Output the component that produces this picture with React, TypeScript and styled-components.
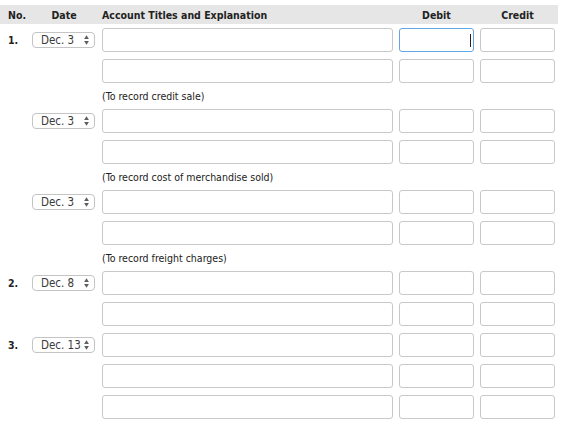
import React from "react";
import styled, { createGlobalStyle, css } from "styled-components";

const GlobalStyle = createGlobalStyle`
  body {
    margin: 0;
    padding-top: 5px;
    background: #ffffff;
    font-family: "DejaVu Sans Condensed", "DejaVu Sans", Verdana, sans-serif;
    font-size: 10.5px;
    color: #222222;
  }
`;

const COLUMNS = "29px 70px 297px 81px 81px";

const Journal = styled.div`
  width: 558px;
  display: flex;
  flex-direction: column;
`;

const HeaderRow = styled.div`
  display: grid;
  grid-template-columns: ${COLUMNS};
  height: 19px;
  align-items: center;
  background: #e6e6e6;
  font-weight: bold;
`;

const HeadCell = styled.div<{ $align?: "left" | "center" }>`
  padding: 0 3px;
  text-align: ${(p) => p.$align || "center"};
  white-space: nowrap;
  &:first-child {
    padding-left: 8px;
  }
`;

const Row = styled.div`
  display: grid;
  grid-template-columns: ${COLUMNS};
  height: 31px;
  box-sizing: border-box;
  padding: 4px 0 3px;
`;

const Cell = styled.div`
  display: flex;
  align-items: center;
  padding: 0 3px;
`;

const NoCell = styled(Cell)`
  padding-left: 8px;
  font-weight: bold;
`;

const NoteRow = styled.div`
  display: grid;
  grid-template-columns: ${COLUMNS};
  height: 19px;
  align-items: center;
`;

const Note = styled.div`
  grid-column: 3 / 6;
  padding: 0 3px;
`;

const SelectWrap = styled.div`
  position: relative;
  width: 63px;
  height: 16px;
`;

const DateSelect = styled.select`
  appearance: none;
  -webkit-appearance: none;
  width: 100%;
  height: 100%;
  box-sizing: border-box;
  margin: 0;
  padding: 0 0 0 8px;
  border: 1px solid #c4c4c4;
  border-radius: 4px;
  background: #ffffff;
  font-family: inherit;
  font-size: 11.5px;
  color: #3a3a3a;
  outline: none;
`;

const Arrows = styled.svg`
  position: absolute;
  right: 6px;
  top: 3px;
  pointer-events: none;
`;

const FieldWrap = styled.div`
  position: relative;
  width: 100%;
`;

const TextBox = styled.input<{ $focused?: boolean; $amount?: boolean }>`
  display: block;
  width: 100%;
  height: 24px;
  box-sizing: border-box;
  margin: 0;
  padding: 0 4px;
  border: 1px solid #c8c8c8;
  border-radius: 3px;
  background: #ffffff;
  font-family: inherit;
  font-size: 10.5px;
  text-align: ${(p) => (p.$amount ? "right" : "left")};
  outline: none;
  ${(p) =>
    p.$focused &&
    css`
      border-color: #62a6e6;
    `}
`;

const Caret = styled.span`
  position: absolute;
  right: 3px;
  top: 6px;
  width: 1px;
  height: 13px;
  background: #222222;
  pointer-events: none;
`;

type Part = { date: string; lines: number; note?: string };
type Entry = { no: string; parts: Part[] };

const entries: Entry[] = [
  {
    no: "1.",
    parts: [
      { date: "Dec. 3", lines: 2, note: "(To record credit sale)" },
      { date: "Dec. 3", lines: 2, note: "(To record cost of merchandise sold)" },
      { date: "Dec. 3", lines: 2, note: "(To record freight charges)" },
    ],
  },
  { no: "2.", parts: [{ date: "Dec. 8", lines: 2 }] },
  { no: "3.", parts: [{ date: "Dec. 13", lines: 3 }] },
];

const Spinner = () => (
  <Arrows width="5" height="10" viewBox="0 0 5 10">
    <path d="M2.5 0.3 L4.9 3.9 L0.1 3.9 Z" fill="#5e5e5e" />
    <path d="M2.5 9.7 L4.9 6.1 L0.1 6.1 Z" fill="#5e5e5e" />
  </Arrows>
);

const App: React.FC = () => {
  return (
    <>
      <GlobalStyle />
      <Journal>
        <HeaderRow>
          <HeadCell $align="left">No.</HeadCell>
          <HeadCell>Date</HeadCell>
          <HeadCell $align="left">Account Titles and Explanation</HeadCell>
          <HeadCell>Debit</HeadCell>
          <HeadCell>Credit</HeadCell>
        </HeaderRow>
        {entries.map((entry, ei) =>
          entry.parts.map((part, pi) => (
            <React.Fragment key={`${ei}-${pi}`}>
              {Array.from({ length: part.lines }).map((_, li) => {
                const active = ei === 0 && pi === 0 && li === 0;
                return (
                  <Row key={li}>
                    <NoCell>{pi === 0 && li === 0 ? entry.no : ""}</NoCell>
                    <Cell>
                      {li === 0 && (
                        <SelectWrap>
                          <DateSelect defaultValue={part.date}>
                            <option>{part.date}</option>
                          </DateSelect>
                          <Spinner />
                        </SelectWrap>
                      )}
                    </Cell>
                    <Cell>
                      <TextBox type="text" />
                    </Cell>
                    <Cell>
                      <FieldWrap>
                        <TextBox type="text" $amount $focused={active} />
                        {active && <Caret />}
                      </FieldWrap>
                    </Cell>
                    <Cell>
                      <TextBox type="text" $amount />
                    </Cell>
                  </Row>
                );
              })}
              {part.note && (
                <NoteRow>
                  <Note>{part.note}</Note>
                </NoteRow>
              )}
            </React.Fragment>
          ))
        )}
      </Journal>
    </>
  );
};

export default App;
